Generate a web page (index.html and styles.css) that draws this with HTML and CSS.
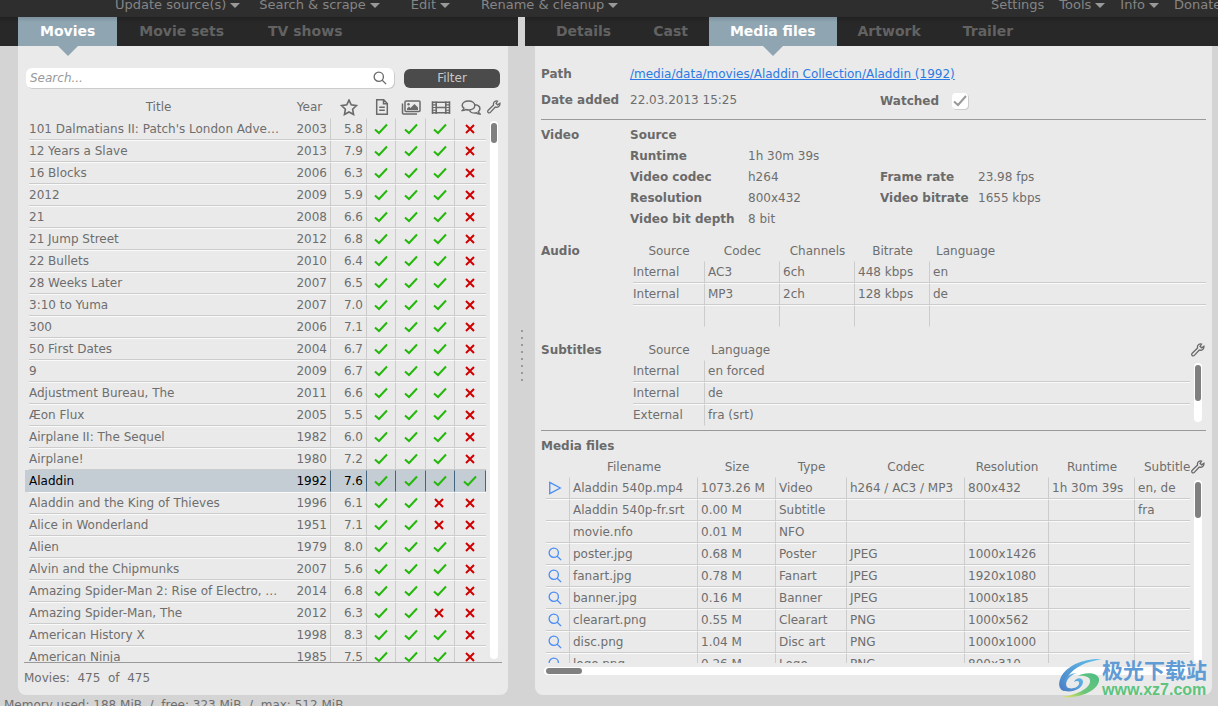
FILE: index.html
```html
<!DOCTYPE html>
<html lang="en">
<head>
    <meta charset="UTF-8">
    <meta name="viewport" content="width=device-width, initial-scale=1.0">
    <title>Movies</title>
    <link rel="stylesheet" href="styles.css">
</head>
<body>

<!-- icon set -->
<svg class="sprite" aria-hidden="true">
    <symbol id="search" viewBox="0 0 16 16"><circle cx="6.6" cy="6.6" r="5.3"/><path d="M10.5 10.5L15 15"/></symbol>
    <symbol id="star" viewBox="0 0 16 16"><path d="M8 1l2.1 4.5 4.9.7-3.6 3.4.9 5L8 12.2l-4.3 2.4.9-5L1 6.200l4.900-.7z"/></symbol>
    <symbol id="file" viewBox="0 0 16 16"><path d="M2.700.8h7l3.600 3.700v10.700H2.700zM9.500.8v4h3.800M5.200 8.300h5.600M5.200 11.300h5.600"/></symbol>
    <symbol id="images" viewBox="0 0 20 16"><rect x="4" y="1.500" width="15" height="10.500" rx="1"/><path d="M1.500 4v9.500q0 1 1 1H16"/><path class="solid" d="M6 10.500V9l2-2 1.500 1.500L13.500 4.500 17 8v2.500z"/><circle class="solid" cx="7.500" cy="4.700" r="1.200"/></symbol>
    <symbol id="film" viewBox="0 0 18 16"><path d="M1 2v12M17 2v12M4.500 2v12M13.500 2v12M1 3h16M1 13h16M4.500 8h9"/><path class="thin" d="M1 5.500h3.500M1 8h3.500M1 10.500h3.500M13.500 5.500H17M13.500 8H17M13.500 10.500H17"/></symbol>
    <symbol id="chat" viewBox="0 0 20 16"><path d="M7.500 1.500c3.700 0 6.300 2 6.300 4.500s-2.600 4.500-6.300 4.500c-1 0-1.900-.2-2.700-.5-.9.700-2 1.100-3.500 1.100.9-.8 1.500-1.500 1.600-2.400C1.800 8 1.200 7 1.200 6c0-2.500 2.600-4.500 6.300-4.500z"/><path d="M14 5.200c2.900.2 4.900 2 4.900 4.100 0 1.100-.5 2-1.500 2.800.1.800.6 1.600 1.500 2.300-1.400 0-2.600-.4-3.500-1.100-3 .8-6-.3-7-2.600"/></symbol>
    <symbol id="wrench" viewBox="0 0 16 16"><path d="M14.700 3.700l-2.500 1.800-1.900-1.700 1.700-2.600C9.600.5 7.500 2 7.300 4.300c0 .6.100 1 .2 1.400L1.400 11.800c-.8.8-.8 1.900-.1 2.500.7.700 1.800.7 2.500-.1l5.700-6.100c3 .9 5.800-1.400 5.200-4.400z"/></symbol>
    <symbol id="yes" viewBox="0 0 14 12"><path d="M1 6.500l4 3.500L13 1.500"/></symbol>
    <symbol id="no" viewBox="0 0 14 12"><path d="M2 2l8 8M10 2l-8 8"/></symbol>
    <symbol id="play" viewBox="0 0 16 16"><path d="M2 1.500v13L14 8z"/></symbol>
</svg>

<nav class="menubar">
    <button>Update source(s)<i class="caret"></i></button>
    <button class="wide">Search &amp; scrape<i class="caret"></i></button>
    <button class="wide">Edit<i class="caret"></i></button>
    <button>Rename &amp; cleanup<i class="caret"></i></button>
    <div class="menu-right">
        <button>Settings</button>
        <button>Tools<i class="caret"></i></button>
        <button>Info<i class="caret"></i></button>
        <button>Donate</button>
    </div>
</nav>

<main class="split">
    <section class="side left">
        <div class="tabs">
            <button class="active">Movies</button>
            <button>Movie sets</button>
            <button>TV shows</button>
        </div>
        <div class="panel movies">
            <div class="search-bar">
                <label class="search-box">
                    <input type="text" placeholder="Search..." aria-label="Search">
                    <svg class="icon"><use href="#search"/></svg>
                </label>
                <button class="filter">Filter</button>
            </div>
            <div class="table-area movie-area">
                <div class="clip">
                    <table class="movie-table">
                        <colgroup><col><col class="c-year"><col class="c-rating"><col class="c-flag"><col class="c-flag-wide"><col class="c-flag"><col class="c-last"></colgroup>
                        <thead>
                            <tr>
                                <th>Title</th>
                                <th>Year</th>
                                <th><svg class="icon head big"><use href="#star"/></svg></th>
                                <th><svg class="icon head"><use href="#file"/></svg></th>
                                <th><svg class="icon head big"><use href="#images"/></svg></th>
                                <th><svg class="icon head big"><use href="#film"/></svg></th>
                                <th><svg class="icon head big"><use href="#chat"/></svg></th>
                            </tr>
                        </thead>
                        <tbody id="movie-rows"></tbody>
                    </table>
                </div>
                <div class="rail">
                    <button class="tool" aria-label="Columns"><svg class="icon"><use href="#wrench"/></svg></button>
                    <div class="track"><div class="thumb short"></div></div>
                </div>
            </div>
            <div class="count">Movies:&nbsp; 475&nbsp; of&nbsp; 475</div>
        </div>
    </section>

    <div class="splitter"><span class="grip"></span></div>

    <section class="side right">
        <div class="tabs">
            <button>Details</button>
            <button>Cast</button>
            <button class="active">Media files</button>
            <button>Artwork</button>
            <button>Trailer</button>
        </div>
        <div class="panel media">
            <div class="fields general">
                <b>Path</b><a class="path" href="#">/media/data/movies/Aladdin Collection/Aladdin (1992)</a>
                <b>Date added</b><span class="span2">22.03.2013 15:25</span>
                <label class="watched" for="watched"><b>Watched</b><input type="checkbox" id="watched" checked></label>
            </div>
            <hr>
            <div class="fields video">
                <b>Video</b><b class="rest">Source</b>
                <b class="second">Runtime</b><span class="rest-value">1h 30m 39s</span>
                <b class="second">Video codec</b><span>h264</span><b>Frame rate</b><span>23.98 fps</span>
                <b class="second">Resolution</b><span>800x432</span><b>Video bitrate</b><span>1655 kbps</span>
                <b class="second">Video bit depth</b><span>8 bit</span>
            </div>
            <div class="block">
                <b>Audio</b>
                <div class="table-area">
                    <table class="stream-table">
                        <colgroup><col class="c-stream-first"><col class="c-stream"><col class="c-stream"><col class="c-stream"><col></colgroup>
                        <thead><tr><th>Source</th><th>Codec</th><th>Channels</th><th>Bitrate</th><th>Language</th></tr></thead>
                        <tbody>
                            <tr><td>Internal</td><td>AC3</td><td>6ch</td><td>448 kbps</td><td>en</td></tr>
                            <tr><td>Internal</td><td>MP3</td><td>2ch</td><td>128 kbps</td><td>de</td></tr>
                            <tr><td></td><td></td><td></td><td></td><td></td></tr>
                        </tbody>
                    </table>
                </div>
            </div>
            <div class="block subtitles">
                <b>Subtitles</b>
                <div class="table-area">
                    <div class="clip">
                        <table class="stream-table">
                            <colgroup><col class="c-stream-first"><col></colgroup>
                            <thead><tr><th>Source</th><th>Language</th></tr></thead>
                            <tbody>
                                <tr><td>Internal</td><td>en forced</td></tr>
                                <tr><td>Internal</td><td>de</td></tr>
                                <tr><td>External</td><td>fra (srt)</td></tr>
                            </tbody>
                        </table>
                    </div>
                    <div class="rail">
                        <button class="tool" aria-label="Columns"><svg class="icon"><use href="#wrench"/></svg></button>
                        <div class="track"><div class="thumb"></div></div>
                    </div>
                </div>
            </div>
            <hr>
            <h2>Media files</h2>
            <div class="table-area file-area">
                <div class="clip">
                    <table class="file-table">
                        <colgroup><col class="f-icon"><col class="f-name"><col class="f-size"><col class="f-type"><col class="f-codec"><col class="f-res"><col class="f-time"><col class="f-sub"></colgroup>
                        <thead><tr><th></th><th>Filename</th><th>Size</th><th>Type</th><th>Codec</th><th>Resolution</th><th>Runtime</th><th>Subtitles</th></tr></thead>
                        <tbody id="file-rows"></tbody>
                    </table>
                </div>
                <div class="rail">
                    <button class="tool" aria-label="Columns"><svg class="icon"><use href="#wrench"/></svg></button>
                    <div class="track"><div class="thumb"></div></div>
                </div>
            </div>
            <div class="track-x"><div class="thumb-x"></div></div>
        </div>
    </section>
</main>

<footer class="status">Memory used: 188 MiB&nbsp; /&nbsp; free: 323 MiB&nbsp; /&nbsp; max: 512 MiB</footer>

<div class="badge">
    <svg class="badge-logo" viewBox="0 0 44 42">
        <defs>
            <linearGradient id="swoosh-blue" x1="1" y1="0" x2="0" y2="1">
                <stop offset="0" stop-color="#63c3ec"/><stop offset="1" stop-color="#4b7cc4"/>
            </linearGradient>
            <linearGradient id="swoosh-green" x1="1" y1="0" x2="0" y2="1">
                <stop offset="0" stop-color="#4dbd85"/><stop offset=".6" stop-color="#6cc67a"/><stop offset="1" stop-color="#e9e45c"/>
            </linearGradient>
        </defs>
        <path fill="url(#swoosh-blue)" d="M44 1C27 0 9 7 3 19c-4 8-1 14 4 14-3-12 8-23 21-28 6-2 11-3 16-4z"/>
        <path fill="url(#swoosh-blue)" d="M7 33c8 2 18-3 18-9 0-5-7-5-9 0 3-2 6-1 5 2-1 4-9 6-12 3-3-4 2-12 10-14C9 15 1 26 7 33z"/>
        <path fill="url(#swoosh-green)" d="M20 18c6-4 20-4 21 3C42 31 24 41 4 39c14-2 27-8 28-15 1-5-5-7-12-6z"/>
    </svg>
    <div>
        <div class="badge-name" lang="zh-CN">极光下载站</div>
        <div class="badge-url">www.xz7.com</div>
    </div>
</div>

<script>
    // flags: nfo, artwork, trailer, subtitles
    const movies = [
        ["101 Dalmatians II: Patch's London Adventure", 2003, "5.8", "1110"],
        ["12 Years a Slave", 2013, "7.9", "1110"],
        ["16 Blocks", 2006, "6.3", "1110"],
        ["2012", 2009, "5.9", "1110"],
        ["21", 2008, "6.6", "1110"],
        ["21 Jump Street", 2012, "6.8", "1110"],
        ["22 Bullets", 2010, "6.4", "1110"],
        ["28 Weeks Later", 2007, "6.5", "1110"],
        ["3:10 to Yuma", 2007, "7.0", "1110"],
        ["300", 2006, "7.1", "1110"],
        ["50 First Dates", 2004, "6.7", "1110"],
        ["9", 2009, "6.7", "1110"],
        ["Adjustment Bureau, The", 2011, "6.6", "1110"],
        ["Æon Flux", 2005, "5.5", "1110"],
        ["Airplane II: The Sequel", 1982, "6.0", "1110"],
        ["Airplane!", 1980, "7.2", "1110"],
        ["Aladdin", 1992, "7.6", "1111"],
        ["Aladdin and the King of Thieves", 1996, "6.1", "1100"],
        ["Alice in Wonderland", 1951, "7.1", "1100"],
        ["Alien", 1979, "8.0", "1110"],
        ["Alvin and the Chipmunks", 2007, "5.6", "1110"],
        ["Amazing Spider-Man 2: Rise of Electro, The", 2014, "6.8", "1110"],
        ["Amazing Spider-Man, The", 2012, "6.3", "1100"],
        ["American History X", 1998, "8.3", "1110"],
        ["American Ninja", 1985, "7.5", "1110"]
    ];

    const files = [
        ["play", "Aladdin 540p.mp4", "1073.26 M", "Video", "h264 / AC3 / MP3", "800x432", "1h 30m 39s", "en, de"],
        ["", "Aladdin 540p-fr.srt", "0.00 M", "Subtitle", "", "", "", "fra"],
        ["", "movie.nfo", "0.01 M", "NFO", "", "", "", ""],
        ["search", "poster.jpg", "0.68 M", "Poster", "JPEG", "1000x1426", "", ""],
        ["search", "fanart.jpg", "0.78 M", "Fanart", "JPEG", "1920x1080", "", ""],
        ["search", "banner.jpg", "0.16 M", "Banner", "JPEG", "1000x185", "", ""],
        ["search", "clearart.png", "0.55 M", "Clearart", "PNG", "1000x562", "", ""],
        ["search", "disc.png", "1.04 M", "Disc art", "PNG", "1000x1000", "", ""],
        ["search", "logo.png", "0.26 M", "Logo", "PNG", "800x310", "", ""]
    ];

    function icon(name, cls) {
        return `<svg class="icon ${cls}"><use href="#${name}"/></svg>`;
    }

    document.getElementById("movie-rows").innerHTML = movies.map(([title, year, rating, flags]) => `
        <tr class="${title === "Aladdin" ? "selected" : ""}">
            <td>${title}</td><td>${year}</td><td>${rating}</td>
            ${[...flags].map(f => `<td>${f === "1" ? icon("yes", "flag yes") : icon("no", "flag no")}</td>`).join("")}
        </tr>`).join("");

    document.getElementById("file-rows").innerHTML = files.map(([type, ...cells]) => `
        <tr><td>${type ? icon(type, "blue") : ""}</td>${cells.map(c => `<td>${c}</td>`).join("")}</tr>`).join("");
</script>

</body>
</html>
```
FILE: styles.css
```css
* {
    box-sizing: border-box;
}
body {
    margin: 0;
    height: 100vh;
    overflow: hidden;
    display: flex;
    flex-direction: column;
    font-family: "DejaVu Sans", sans-serif;
    font-size: 12px;
    line-height: 20px;
    color: #6e6e6e;
    background-color: #d4d4d4;
}
button {
    font: inherit;
    color: inherit;
    background: none;
    border: none;
    padding: 0;
    white-space: nowrap;
}
b, h2 {
    font-size: 12px;
    font-weight: bold;
    color: #6a6a6a;
    white-space: nowrap;
}
.sprite {
    display: none;
}
.icon {
    width: 14px;
    height: 14px;
    display: block;
    margin: auto;
    flex: none;
    fill: none;
    stroke: #6a6a6a;
    stroke-width: 1.5;
}
.solid {
    fill: #6a6a6a;
    stroke: none;
}
.thin {
    stroke-width: 1;
}

/* menu */
.menubar {
    display: flex;
    align-items: flex-end;
    height: 17px;
    flex: none;
    padding: 0 0 2px 115px;
    background-color: #2e2e2e;
    color: #858585;
    font-size: 13px;
}
.menubar button {
    display: flex;
    align-items: center;
    margin-right: 19px;
}
.menubar .wide {
    margin-right: 31px;
}
.caret {
    border: 5px solid transparent;
    border-top-color: #999;
    border-bottom: none;
    margin-left: 4px;
}
.menubar .menu-right {
    display: flex;
    flex: none;
    width: 227px;
    margin-left: auto;
    overflow: hidden;
}
.menubar .menu-right button {
    margin-right: 15px;
}

/* split view */
.split {
    flex: 1;
    min-height: 0;
    display: grid;
    grid-template-columns: 518fr 7px 693fr;
    grid-template-rows: 100%;
}
.side {
    display: flex;
    flex-direction: column;
    min-width: 0;
}
.tabs {
    display: flex;
    flex: none;
    height: 29px;
    background: linear-gradient(#202020, #282828 5px);
    font-size: 14px;
    font-weight: bold;
    color: #626262;
}
.left .tabs {
    padding-left: 18px;
}
.right .tabs {
    padding-left: 10px;
}
.tabs button {
    padding: 0 21px 2px;
    position: relative;
}
.left .tabs button {
    padding: 0 22px 2px;
}
.tabs .active {
    background: linear-gradient(#7d919e, #8fa5b2 5px);
    color: #fff;
}
.tabs .active::after {
    content: "";
    position: absolute;
    top: 100%;
    left: calc(50% - 10px);
    border: 10px solid transparent;
    border-top-color: #8fa5b2;
    border-bottom: none;
}
.panel {
    flex: 1;
    min-height: 0;
    display: flex;
    flex-direction: column;
    background-color: #eaeaea;
    border-radius: 0 0 8px 8px;
}
.movies {
    margin: 0 10px 0 18px;
    padding: 22px 6px 0;
}
.media {
    margin: 0 6px 0 10px;
    padding: 18px 6px 20px;
}
.splitter {
    display: flex;
    align-items: center;
    justify-content: center;
}
.grip {
    width: 2px;
    height: 52px;
    background: repeating-linear-gradient(#999 0 2px, transparent 2px 7px);
}

/* search */
.search-bar {
    display: flex;
    gap: 10px;
    padding: 0 2px;
}
.search-box {
    flex: 1;
    display: flex;
    align-items: center;
    height: 20px;
    padding-right: 7px;
    background-color: #fff;
    border-radius: 6px;
    box-shadow: 1px 1px 0 #ccc;
}
.search-box input {
    flex: 1;
    min-width: 0;
    border: none;
    outline: none;
    background: none;
    padding: 0 4px;
    font: inherit;
    font-style: italic;
}
.search-box input::placeholder {
    color: #999;
}
.filter {
    width: 96px;
    height: 19px;
    margin-top: 1px;
    border-radius: 6px;
    background-color: #4b4b4b;
    color: #c8c8c8;
    line-height: 19px;
}

/* tables */
.table-area {
    display: flex;
    min-width: 0;
}
.clip {
    flex: 1;
    min-width: 0;
    overflow: hidden;
}
table {
    width: 100%;
    table-layout: fixed;
    border-spacing: 0;
}
th, td {
    padding: 0 3px;
    white-space: nowrap;
    overflow: hidden;
}
th {
    height: 20px;
    font-weight: normal;
}
td {
    height: 22px;
    border: solid #ccc;
    border-width: 1px 1px 1px 0;
    border-top-color: #fafafa;
}
tr:first-child td {
    border-top-color: transparent;
}
td:last-child {
    border-right: none;
}
.rail {
    width: 16px;
    flex: none;
    display: flex;
    flex-direction: column;
    align-items: center;
}
.tool {
    height: 20px;
}
.track {
    flex: 1;
    width: 8px;
    margin-top: 3px;
    padding: 2px 1px;
    border-radius: 4px;
    background-color: #fff;
}
.thumb {
    height: 36px;
    border-radius: 3px;
    background-color: #808080;
}
.thumb.short {
    height: 20px;
}

/* movie list */
.movie-area {
    flex: 1;
    min-height: 0;
    margin-top: 8px;
}
.movie-area .clip {
    padding-left: 5px;
}
.movie-area th, .movie-area .tool {
    height: 22px;
}
.movie-area .track {
    margin-bottom: 3px;
}
.c-year { width: 43px; }
.c-rating { width: 36px; }
.c-flag { width: 29px; }
.c-flag-wide { width: 30px; }
.c-last { width: 31px; }
.movie-table td {
    text-overflow: ellipsis;
}
.movie-table td:first-child {
    padding: 0 5px 0 0;
    border-right: none;
}
.movie-table th:nth-child(n+3), .movie-table td:nth-child(n+4) {
    padding: 0;
}
.movie-table td:nth-child(2), .movie-table td:nth-child(3) {
    text-align: right;
    padding: 0 3px 0 0;
}
.icon.head {
    width: 16px;
    height: 16px;
}
.icon.big {
    width: 20px;
    height: 17px;
}
.icon.flag {
    width: 14px;
    height: 12px;
    stroke-width: 2;
}
.icon.yes {
    stroke: #25b80c;
}
.icon.no {
    stroke: #d00000;
}
.icon.blue {
    stroke: #4c8cf5;
}
.selected td {
    background-color: #c5cdd4;
    border-color: #c5cdd4;
    border-right: 1px solid #446681;
    color: #000;
}
.selected td:first-child {
    box-shadow: -4px 0 0 #c5cdd4;
}
.count {
    height: 33px;
    flex: none;
    padding-top: 5px;
    border-top: 1px solid #999;
}

/* details */
.fields {
    display: grid;
    grid-template-columns: 89px 118px 132px 98px 1fr;
    grid-auto-rows: 21px;
    white-space: nowrap;
}
.general {
    row-gap: 5px;
}
.path {
    grid-column: 2 / -1;
    justify-self: start;
    color: #2a7be4;
}
.span2 {
    grid-column: span 2;
}
.watched {
    grid-column: span 2;
    display: flex;
    align-items: center;
    gap: 13px;
}
.watched input {
    appearance: none;
    width: 16px;
    height: 16px;
    margin: 0;
    border-radius: 4px;
    background-color: #fff;
    box-shadow: 1px 1px 0 #ccc;
}
.watched input:checked {
    background-image: url("data:image/svg+xml,%3Csvg xmlns='http://www.w3.org/2000/svg' viewBox='0 0 16 16'%3E%3Cpath d='M2 8.500l4 3.500 8-9' fill='none' stroke='%23999' stroke-width='2'/%3E%3C/svg%3E");
}
.second {
    grid-column: 2;
}
.rest {
    grid-column: 2 / -1;
}
.rest-value {
    grid-column: 3 / -1;
}
hr {
    width: 100%;
    height: 2px;
    flex: none;
    margin: 8px 0 4px;
    border: solid #999;
    border-width: 1px 0 0;
}
.subtitles + hr {
    margin-top: 4px;
}
.block {
    display: grid;
    grid-template-columns: 89px 1fr;
    margin-top: 11px;
}
.block .table-area {
    padding-left: 3px;
}
.subtitles {
    margin-top: 13px;
}
.subtitles .track {
    margin-bottom: 4px;
}
.c-stream-first { width: 72px; }
.c-stream { width: 75px; }
.stream-table td:first-child {
    padding-left: 0;
}
.stream-table th:last-child {
    text-align: left;
    padding-left: 6px;
}
.stream-table tr:last-child td {
    border-bottom-color: transparent;
}
h2 {
    margin: 0 0 1px;
    flex: none;
}
.file-area {
    flex: 1;
    min-height: 0;
    padding-left: 5px;
}
.f-icon { width: 24px; }
.f-name { width: 128px; }
.f-size { width: 78px; }
.f-type { width: 71px; }
.f-codec { width: 118px; }
.f-res { width: 84px; }
.f-time { width: 86px; }
.file-table td:first-child {
    padding: 0 6px 0 0;
}
.file-table th:last-child {
    padding-left: 9px;
    text-align: left;
}
.track-x {
    flex: none;
    height: 8px;
    margin: 4px 16px 0 3px;
    padding: 1px 2px;
    border-radius: 4px;
    background-color: #fff;
}
.thumb-x {
    width: 36px;
    height: 6px;
    border-radius: 3px;
    background-color: #808080;
}
.status {
    flex: none;
    height: 11px;
    padding-left: 4px;
    overflow: hidden;
}

/* site badge over the corner */
.badge {
    position: absolute;
    right: 11px;
    bottom: 6px;
    display: flex;
    align-items: center;
}
.badge-logo {
    width: 44px;
    height: 42px;
}
.badge-name {
    font: bold 21px/22px "Noto Sans CJK SC", sans-serif;
    color: #5f9bd5;
}
.badge-url {
    font: bold 16px/20px "Liberation Sans", sans-serif;
    color: #5cc47c;
}
```
